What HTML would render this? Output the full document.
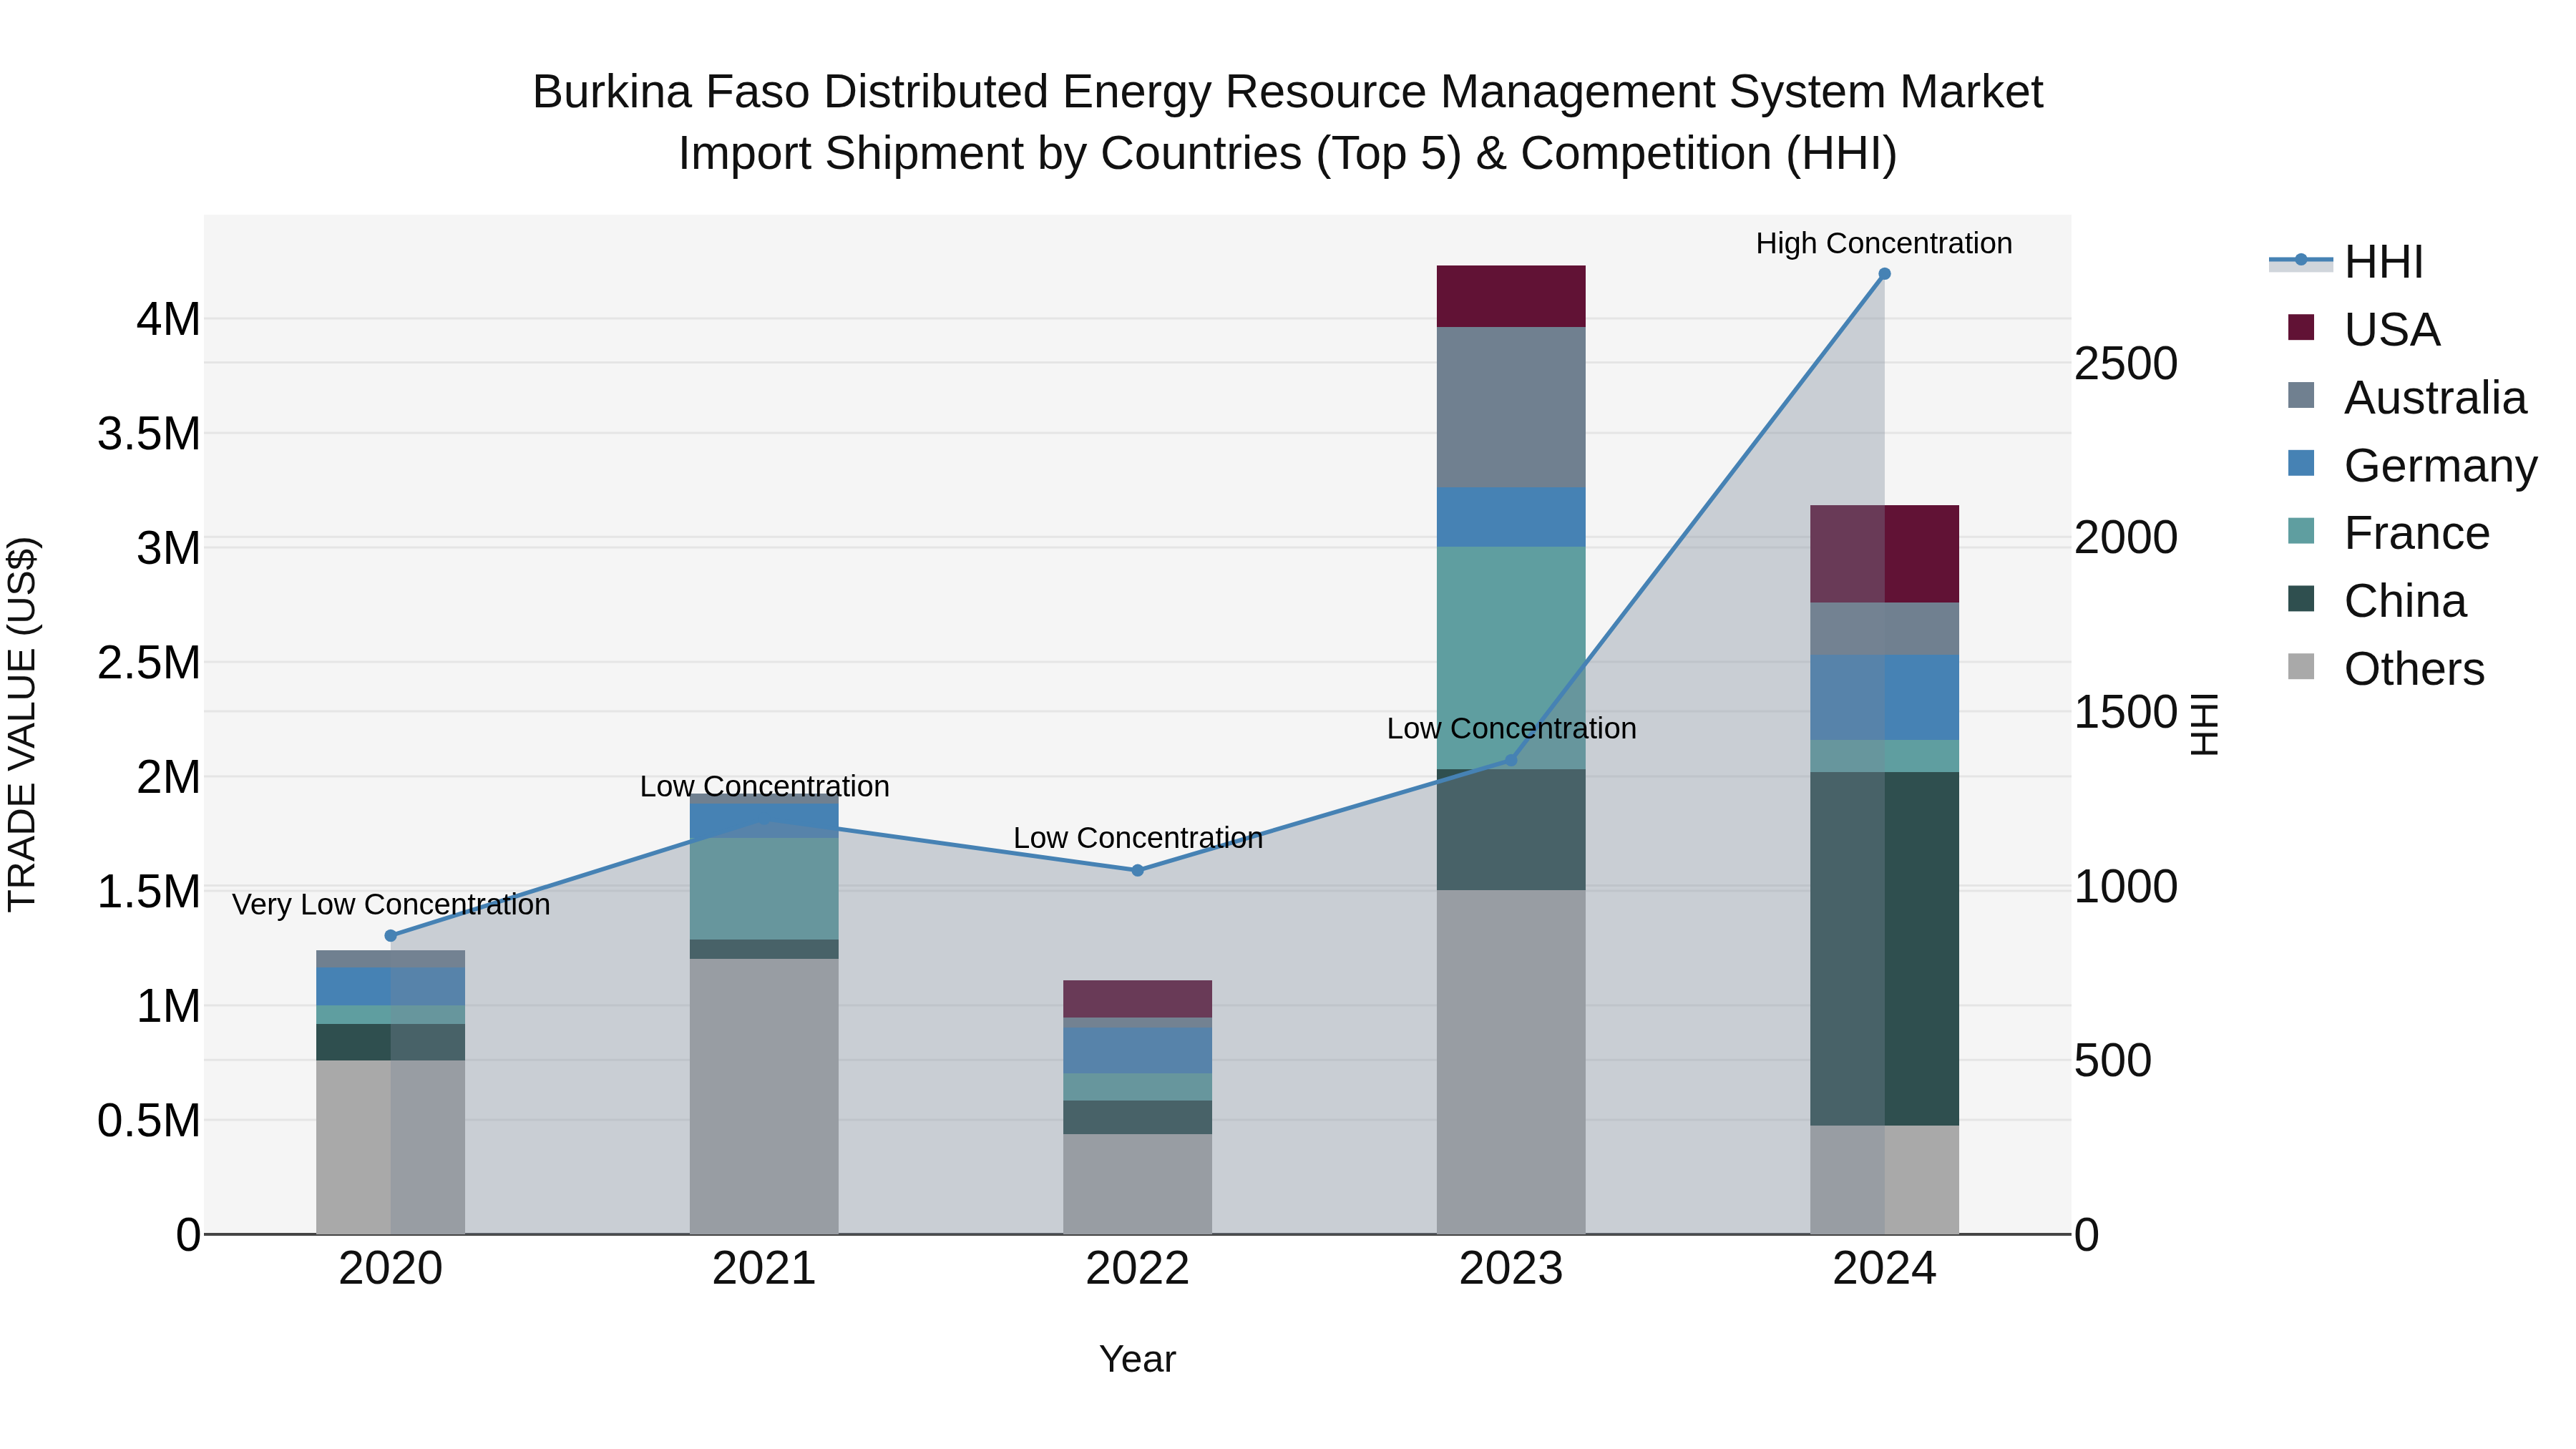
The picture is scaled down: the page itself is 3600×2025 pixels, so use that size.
<!DOCTYPE html>
<html lang="en"><head><meta charset="utf-8">
<title>Burkina Faso Distributed Energy Resource Management System Market</title>
<style>
html,body{margin:0;padding:0;background:#fff}
svg{display:block;width:3600px;height:2025px;will-change:transform}
@media (min-resolution:1.5dppx){svg{width:100vw;height:56.25vw}}
text{font-family:"Liberation Sans", Arial, Helvetica, sans-serif;white-space:pre}
</style></head><body>
<svg viewBox="0 0 3600 2025" width="3600" height="2025">
<rect x="0" y="0" width="3600" height="2025" fill="#ffffff"/>
<rect x="285" y="300" width="2610" height="1425" fill="#f5f5f5"/>
<g stroke="#e5e5e5" stroke-width="3" fill="none">
<path d="M285,1481.3H2895"/>
<path d="M285,1237.6H2895"/>
<path d="M285,993.9H2895"/>
<path d="M285,750.2H2895"/>
<path d="M285,506.5H2895"/>
<path d="M285,1565H2895"/>
<path d="M285,1405H2895"/>
<path d="M285,1245H2895"/>
<path d="M285,1085H2895"/>
<path d="M285,925H2895"/>
<path d="M285,765H2895"/>
<path d="M285,605H2895"/>
<path d="M285,445H2895"/>
</g>
<path d="M285,1725H2895" stroke="#444444" stroke-width="4" fill="none"/>
<g shape-rendering="crispEdges">
<rect x="441.6" y="1481.7" width="208.8" height="243.3" fill="#a9a9a9"/>
<rect x="441.6" y="1431" width="208.8" height="50.7" fill="#2f4f4f"/>
<rect x="441.6" y="1405" width="208.8" height="26" fill="#5f9ea0"/>
<rect x="441.6" y="1352" width="208.8" height="53" fill="#4682b4"/>
<rect x="441.6" y="1328" width="208.8" height="24" fill="#708090"/>
<rect x="963.6" y="1339.75" width="208.8" height="385.25" fill="#a9a9a9"/>
<rect x="963.6" y="1312.9" width="208.8" height="26.85" fill="#2f4f4f"/>
<rect x="963.6" y="1170.9" width="208.8" height="142" fill="#5f9ea0"/>
<rect x="963.6" y="1123.1" width="208.8" height="47.8" fill="#4682b4"/>
<rect x="963.6" y="1109.4" width="208.8" height="13.7" fill="#708090"/>
<rect x="1485.6" y="1585" width="208.8" height="140" fill="#a9a9a9"/>
<rect x="1485.6" y="1537.9" width="208.8" height="47.1" fill="#2f4f4f"/>
<rect x="1485.6" y="1500" width="208.8" height="37.9" fill="#5f9ea0"/>
<rect x="1485.6" y="1435.7" width="208.8" height="64.3" fill="#4682b4"/>
<rect x="1485.6" y="1422" width="208.8" height="13.7" fill="#708090"/>
<rect x="1485.6" y="1369.9" width="208.8" height="52.1" fill="#611235"/>
<rect x="2007.6" y="1243.9" width="208.8" height="481.1" fill="#a9a9a9"/>
<rect x="2007.6" y="1075" width="208.8" height="168.9" fill="#2f4f4f"/>
<rect x="2007.6" y="763.9" width="208.8" height="311.1" fill="#5f9ea0"/>
<rect x="2007.6" y="681.1" width="208.8" height="82.8" fill="#4682b4"/>
<rect x="2007.6" y="456.8" width="208.8" height="224.3" fill="#708090"/>
<rect x="2007.6" y="371" width="208.8" height="85.8" fill="#611235"/>
<rect x="2529.6" y="1572.8" width="208.8" height="152.2" fill="#a9a9a9"/>
<rect x="2529.6" y="1078.9" width="208.8" height="493.9" fill="#2f4f4f"/>
<rect x="2529.6" y="1033.8" width="208.8" height="45.1" fill="#5f9ea0"/>
<rect x="2529.6" y="914.7" width="208.8" height="119.1" fill="#4682b4"/>
<rect x="2529.6" y="841.9" width="208.8" height="72.8" fill="#708090"/>
<rect x="2529.6" y="706.1" width="208.8" height="135.8" fill="#611235"/>
</g>
<path d="M546,1725 L546,1307.5 L1068,1144 L1590,1216.3 L2112,1062.4 L2634,382.4 L2634,1725Z" fill="rgba(119,136,153,0.35)" stroke="none"/>
<path d="M546,1307.5 L1068,1144 L1590,1216.3 L2112,1062.4 L2634,382.4" fill="none" stroke="#4682b4" stroke-width="6" stroke-linejoin="round"/>
<circle cx="546" cy="1307.5" r="8.7" fill="#4682b4"/>
<circle cx="1068" cy="1144" r="8.7" fill="#4682b4"/>
<circle cx="1590" cy="1216.3" r="8.7" fill="#4682b4"/>
<circle cx="2112" cy="1062.4" r="8.7" fill="#4682b4"/>
<circle cx="2634" cy="382.4" r="8.7" fill="#4682b4"/>
<g font-size="42" fill="#000000" text-anchor="middle" style="filter:opacity(1)">
<text x="547" y="1278">Very Low Concentration</text>
<text x="1069" y="1112.5">Low Concentration</text>
<text x="1591" y="1184.9">Low Concentration</text>
<text x="2113" y="1031.9">Low Concentration</text>
<text x="2633.6" y="353.9">High Concentration</text>
</g>
<g font-size="66" fill="#000000" text-anchor="end">
<text x="282" y="1748">0</text>
<text x="282" y="1588">0.5M</text>
<text x="282" y="1428">1M</text>
<text x="282" y="1268">1.5M</text>
<text x="282" y="1108">2M</text>
<text x="282" y="948">2.5M</text>
<text x="282" y="788">3M</text>
<text x="282" y="628">3.5M</text>
<text x="282" y="468">4M</text>
</g>
<g font-size="66" fill="#111111" text-anchor="start">
<text x="2898" y="1748">0</text>
<text x="2898" y="1504.3">500</text>
<text x="2898" y="1260.6">1000</text>
<text x="2898" y="1016.9">1500</text>
<text x="2898" y="773.2">2000</text>
<text x="2898" y="529.5">2500</text>
</g>
<g font-size="66" fill="#111111" text-anchor="middle">
<text x="546" y="1794">2020</text>
<text x="1068" y="1794">2021</text>
<text x="1590" y="1794">2022</text>
<text x="2112" y="1794">2023</text>
<text x="2634" y="1794">2024</text>
</g>
<g font-size="54" fill="#111111" text-anchor="middle">
<text x="1590" y="1917">Year</text>
<text transform="translate(47.7,1012.5) rotate(-90)">TRADE VALUE (US$)</text>
<text transform="translate(3099,1012.5) rotate(-90)">HHI</text>
</g>
<g font-size="66" fill="#111111" text-anchor="middle">
<text x="1800" y="150">Burkina Faso Distributed Energy Resource Management System Market</text>
<text x="1800" y="236">Import Shipment by Countries (Top 5) &amp; Competition (HHI)</text>
</g>
<g font-size="66" fill="#111111">
<rect x="3171" y="362.4" width="90" height="18" fill="rgba(119,136,153,0.35)"/>
<path d="M3171,362.4h90" stroke="#4682b4" stroke-width="6" fill="none"/>
<circle cx="3216" cy="362.4" r="8.7" fill="#4682b4"/>
<text x="3276" y="388.1">HHI</text>
<rect x="3198" y="439.2" width="36" height="36" fill="#611235"/>
<text x="3276" y="482.9">USA</text>
<rect x="3198" y="534" width="36" height="36" fill="#708090"/>
<text x="3276" y="577.7">Australia</text>
<rect x="3198" y="628.8" width="36" height="36" fill="#4682b4"/>
<text x="3276" y="672.5">Germany</text>
<rect x="3198" y="723.6" width="36" height="36" fill="#5f9ea0"/>
<text x="3276" y="767.3">France</text>
<rect x="3198" y="818.4" width="36" height="36" fill="#2f4f4f"/>
<text x="3276" y="862.1">China</text>
<rect x="3198" y="913.2" width="36" height="36" fill="#a9a9a9"/>
<text x="3276" y="956.9">Others</text>
</g>
</svg>
</body></html>
